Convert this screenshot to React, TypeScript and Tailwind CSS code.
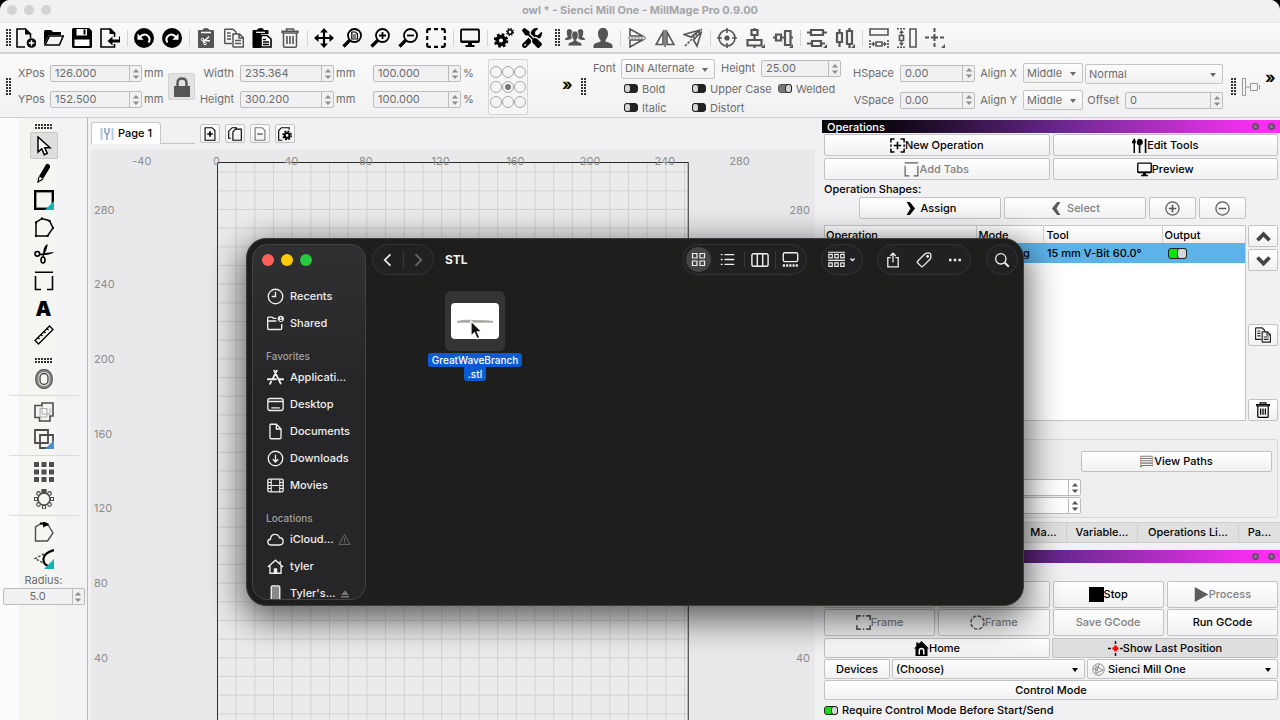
import { useId } from "react";
import type { ReactNode } from "react";
import clsx from "clsx";
import { FaScrewdriverWrench } from "react-icons/fa6";

/* ---------- icon drawings, 20x20 grid ---------- */

const person = "M10 0c3 0 5 2 5 5.500c0 3-1 5-2.500 6.500v1.500l5 1.800q2 .8 2 2.700v2h-19v-2q0-1.900 2-2.700l5-1.800V12C6 10.500 5 8.500 5 5.500C5 2 7 0 10 0z";

const ICONS: Record<string, ReactNode> = {
  newFile: (
    <>
      <path d="M9 19H1V1h8.500l5 5v4" />
      <path d="M9 0v6.500h6.500z" fill="currentColor" stroke="none" />
      <circle cx="15.500" cy="15" r="4.800" fill="currentColor" stroke="none" />
      <path d="M12.700 15h5.600M15.500 12.200v5.600" stroke="#fff" strokeWidth="1.500" />
    </>
  ),
  open: (
    <>
      <path d="M0 3.500Q0 2 1.500 2H7l2 2h8v3H5L1 15l-1 2z" fill="currentColor" stroke="none" />
      <path d="M5.500 8h13.700l-3.800 9H1z" />
    </>
  ),
  save: (
    <>
      <path d="M1.500 0H17l3 3v15.500q0 1.500-1.500 1.500h-17Q0 20 0 18.500v-17Q0 0 1.500 0z" fill="currentColor" stroke="none" />
      <path d="M4.500 1h10.500v6.500H4.500zM2.500 11.500h15V18h-15z" fill="#fff" stroke="none" />
      <path d="M11.500 1.500h2v5h-2z" fill="currentColor" stroke="none" />
    </>
  ),
  exportFile: (
    <>
      <path d="M14.500 16v3H1V1h9.500l4 4v4" />
      <path d="M9.500 0v6H16z" fill="currentColor" stroke="none" />
      <path d="M7.500 13l5-4.500v3H19V8.500h1v6h-7.500v3z" fill="currentColor" stroke="none" />
    </>
  ),
  undo: (
    <>
      <circle cx="10" cy="10" r="10" fill="currentColor" stroke="none" />
      <path d="M5.500 9.500q4.500-5 8.500-1.500q3 3 .5 6.500" stroke="#fff" strokeWidth="2" />
      <path d="M3.500 5.500v6.200h6.200z" fill="#fff" stroke="none" />
    </>
  ),
  redo: (
    <>
      <circle cx="10" cy="10" r="10" fill="currentColor" stroke="none" />
      <path d="M14.500 9.500q-4.500-5-8.500-1.500q-3 3-.5 6.500" stroke="#fff" strokeWidth="2" />
      <path d="M16.500 5.500v6.200h-6.200z" fill="#fff" stroke="none" />
    </>
  ),
  cut: (
    <>
      <path d="M3 2h3.500Q7 0 10 0t3.500 2H17q1 0 1 1v16q0 1-1 1H3q-1 0-1-1V3q0-1 1-1z" fill="currentColor" stroke="none" />
      <path d="M5 4.500h10M7 14.500l6-6M7 12l7 1" stroke="#fff" strokeWidth="1.300" />
      <circle cx="6.500" cy="11.500" r="1.300" stroke="#fff" strokeWidth="1" />
      <circle cx="9" cy="15.500" r="1.300" stroke="#fff" strokeWidth="1" />
    </>
  ),
  copy: (
    <g strokeWidth="1.500">
      <path d="M8 15.500H1.500q-.8 0-.8-.8V2q0-.8.8-.8H9L12 4v2" />
      <path d="M3 5h3.500M3 8h4M3 11h4" />
      <path d="M9 6h6.500l3.800 3.500V19H9.800q-.8 0-.8-.8zM15 6v4h4" fill="#f6f6f6" />
      <path d="M11 12.500h6M11 15.500h6" />
    </g>
  ),
  paste: (
    <>
      <path d="M1.500 2H5q.5-2 3.500-2T12 2h3.500q1 0 1 1v3H9v14H1.500q-1 0-1-1V3q0-1 1-1z" fill="currentColor" stroke="none" />
      <path d="M4 4.300h9" stroke="#fff" strokeWidth="1.200" />
      <path d="M9 7.500h6l4 3.500v8H9z" fill="#fff" strokeWidth="1.600" />
      <path d="M11 11.500h3M11 14h6M11 16.500h6" strokeWidth="1.300" />
    </>
  ),
  trash: (
    <g strokeWidth="1.500">
      <path d="M2 5h16M3.500 5v13q0 1.200 1.200 1.200h10.600q1.200 0 1.200-1.200V5M2 5V3.300h16V5M6.500 3V1h7v2" />
      <path d="M7 8v8M10 8v8M13 8v8" strokeWidth="1.600" />
    </g>
  ),
  move: (
    <>
      <path d="M10 3v14M3 10h14" strokeWidth="2.200" />
      <path d="M10 0l4 4.500H6zM10 20l4-4.500H6zM0 10l4.500-4v8zM20 10l-4.500-4v8z" fill="currentColor" stroke="none" />
    </>
  ),
  zoomPage: (
    <>
      <circle cx="12.500" cy="7.500" r="6.500" strokeWidth="1.800" />
      <path d="M8 12l-6.500 6.500" strokeWidth="3.200" />
      <path d="M9.800 4h3.700l2 2v5H9.800z" strokeWidth="1.200" />
      <path d="M11 7h3M11 9h3" strokeWidth="1" />
    </>
  ),
  zoomIn: (
    <>
      <circle cx="12.500" cy="7.500" r="6.500" strokeWidth="1.800" />
      <path d="M8 12l-6.500 6.500" strokeWidth="3.200" />
      <path d="M9 7.500h7M12.500 4v7" strokeWidth="1.800" />
    </>
  ),
  zoomOut: (
    <>
      <circle cx="12.500" cy="7.500" r="6.500" strokeWidth="1.800" />
      <path d="M8 12l-6.500 6.500" strokeWidth="3.200" />
      <path d="M9 7.500h7" strokeWidth="1.800" />
    </>
  ),
  frame: <path d="M1.200 5V2.500q0-1.300 1.300-1.300H5M8 1.200h4M15 1.200h2.500q1.300 0 1.300 1.300V5M18.800 8v4M18.800 15v2.500q0 1.300-1.300 1.300H15M12 18.800H8M5 18.800H2.500q-1.300 0-1.300-1.300V15M1.200 12V8" strokeWidth="2.200" />,
  monitor: (
    <>
      <rect x="1" y="1.500" width="18" height="12.500" rx="1" strokeWidth="1.800" />
      <path d="M1 12.500h18v2H1zM8 14h4v3h2.500v2h-9v-2H8z" fill="currentColor" stroke="none" />
    </>
  ),
  gears: (
    <>
      <circle cx="7" cy="12.500" r="3.900" strokeWidth="3.600" />
      <circle cx="7" cy="12.500" r="6.200" strokeWidth="2.200" strokeDasharray="2.600 2.270" />
      <circle cx="16" cy="4" r="2.200" strokeWidth="1.600" />
      <circle cx="16" cy="4" r="3.500" strokeWidth="1.100" strokeDasharray="1.400 1.350" />
    </>
  ),
  group: (
    <g fill="currentColor" stroke="none">
      <path d="M4.500 1q2.500 0 2.700 2.500l.3 4q-1 1-1 3.500L3 12H0q0-2.500 3-3Q1.500 7 1.800 3.800Q2 1 4.500 1zM15.500 1Q13 1 12.800 3.500l-.3 4q1 1 1 3.500l3.500 1h3q0-2.500-3-3q1.500-2 1.200-5.200Q18 1 15.500 1z" />
      <path d="M10 3c2 0 3.300 1.300 3.300 4c0 2-.8 3.500-1.600 4.500v1.300l3.800 1.700q1.500.7 1.500 2.500v1H3v-1q0-1.800 1.500-2.500l3.800-1.700v-1.300C7.500 10.500 6.700 9 6.700 7c0-2.700 1.300-4 3.300-4z" stroke="#f6f6f6" strokeWidth=".8" />
    </g>
  ),
  person: <path d={person} fill="currentColor" stroke="none" />,
  flipV: (
    <g strokeWidth="1.600">
      <path d="M3 1v7h12.500zM3 19v-7h12.500z" />
      <path d="M1 10h18" strokeDasharray="2 1.200" strokeWidth="1.200" />
    </g>
  ),
  flipH: (
    <g strokeWidth="1.600">
      <path d="M1 16.500h7V4zM19 16.500h-7V4z" />
      <path d="M10 2v17" strokeWidth="1.400" />
    </g>
  ),
  mirror: (
    <g strokeWidth="1.600">
      <path d="M1 6.500L17 2 8 9zM18.500 3.500L14 18l-3.500-6z" />
      <path d="M2 18L19 1" strokeDasharray="2.500 1.200" />
    </g>
  ),
  target: (
    <>
      <circle cx="10" cy="10" r="8" strokeWidth="1.600" />
      <circle cx="10" cy="10" r="2.600" fill="currentColor" stroke="none" />
      <path d="M10 0v5M10 15v5M0 10h5M15 10h5" strokeWidth="1.600" />
    </>
  ),
  alignV: (
    <g strokeWidth="2.200">
      <path d="M6.500 2h6v5h-6zM2.500 12h14v5.500h-14zM9.500 0v1M9.500 7v5M9.500 18v2" />
      <path d="M20 16v4h-4z" fill="currentColor" stroke="none" />
    </g>
  ),
  alignH: (
    <g strokeWidth="2.200">
      <path d="M3 6.500h5v6H3zM12 3h5.500v14H12zM0 9.500h2M8 9.500h4M18 9.500h2" />
      <path d="M20 16v4h-4z" fill="currentColor" stroke="none" />
    </g>
  ),
  distV: (
    <g strokeWidth="2.200">
      <path d="M4 2h12v5H4zM5 13h9v5H5zM0 4.500h4M16 4.500h4M0 15.500h5M14 15.500h4" />
      <path d="M20 16v4h-4z" fill="currentColor" stroke="none" />
    </g>
  ),
  distH: (
    <g strokeWidth="2.200">
      <path d="M2 5h5v9H2zM12 3h5v13h-5zM4.500 1v4M4.500 14v5M14.500 0v3M14.500 16v4" />
      <path d="M20 16v4h-4z" fill="currentColor" stroke="none" />
    </g>
  ),
  sameW: (
    <g strokeWidth="1.600">
      <path d="M1 1h18v6H1zM7 14h6v4H7zM3 16h3M14 16h3" />
      <path d="M5 13.500v5L2 16zM15 13.500v5l3-2.500z" fill="currentColor" stroke="none" />
      <path d="M1 12v8M19 12v8" strokeDasharray="2 1" />
    </g>
  ),
  sameH: (
    <g strokeWidth="1.600">
      <path d="M13 1h6v18h-6zM2.500 7.500h4v5h-4zM4.500 3v4M4.500 13v4" />
      <path d="M2 5h5L4.500 2zM2 15h5l-2.500 3z" fill="currentColor" stroke="none" />
      <path d="M0 .8h9M0 19.200h9" strokeDasharray="2 1" />
    </g>
  ),
  center: (
    <>
      <path d="M9.500 0v4M9.500 6v7M9.500 15v4M0 9.500h4M6 9.500h7M15 9.500h4" strokeWidth="2" />
      <path d="M20 16v4h-4z" fill="currentColor" stroke="none" />
    </>
  ),
  arrow: <path d="M4 1v15l3.800-3.300 2.500 6 3-1.300-2.500-5.700H16z" fill="#fff" strokeWidth="1.500" />,
  pencil: (
    <>
      <path d="M12 1.500q1.500-1.500 3 0t1 3L9 16l-4-2.800z" fill="currentColor" stroke="none" />
      <path d="M5 13.500L4 19l5-3" strokeWidth="1.200" />
    </>
  ),
  rect: (
    <>
      <rect x="1.200" y="1.200" width="17.600" height="17.600" strokeWidth="2.400" />
      <path d="M20 11v9h-9z" fill="#12b3b8" stroke="none" />
    </>
  ),
  polygon: (
    <>
      <path d="M2 19V5.500L8 1.500l7.500 2.200L19 11l-5.500 8z" strokeWidth="1.500" />
      <path d="M1 4.500h2v2H1zM7 .5h2v2H7zM14.500 3h2v2h-2zM18 10h2v2h-2zM12.500 18h2v2h-2zM1 18h2v2H1z" fill="currentColor" stroke="none" />
    </>
  ),
  scissors: (
    <>
      <circle cx="3.300" cy="9.800" r="2.300" strokeWidth="1.600" />
      <ellipse cx="9" cy="16" rx="2" ry="3" strokeWidth="1.600" />
      <path d="M5.500 9.800L20 8q-2 2.500-10 3l-4.500.2zM8.500 13L9.500 6Q10.500 1.500 13.500 0q.5 3-2.500 9l-1.500 4z" fill="currentColor" stroke="none" />
    </>
  ),
  tabs: <path d="M1 1.200h18M1.500 5v13.500H7M18.500 5v13.500H13" strokeWidth="1.600" />,
  ruler: (
    <g strokeWidth="1.300">
      <path d="M1 15.500L15.500 1 19 4.500 4.500 19z" />
      <path d="M4 12.500l1.500 1.500M7 9.500l1.500 1.500M10 6.500L11.500 8M13 3.500L14.500 5" />
    </g>
  ),
  ring: (
    <>
      <rect x="3" y="1.500" width="14" height="17" rx="7" strokeWidth="3" stroke="#888" />
      <rect x="6" y="4.500" width="8" height="11" rx="4" strokeWidth="1.400" />
      <rect x="1.800" y=".6" width="16.400" height="18.800" rx="8" strokeWidth="1" />
    </>
  ),
  union: (
    <>
      <path d="M1 3.500h7V1h11v13h-3v5H5.500v-3.500H1z" strokeWidth="1.600" />
      <path d="M6 6.500h7V15H6zM8 4v8h8V6" stroke="#aaa" strokeWidth="1" />
    </>
  ),
  intersect: (
    <>
      <path d="M1 1h13v13H1zM6 6h13v13H6z" strokeWidth="1.800" />
      <path d="M20 11v9h-9z" fill="#4a90d0" stroke="none" />
    </>
  ),
  gridArray: <path d="M0 0h5v5H0zM7.500 0h5v5h-5zM15 0h5v5h-5zM0 7.500h5v5H0zM7.500 7.500h5v5h-5zM15 7.500h5v5h-5zM0 15h5v5H0zM7.500 15h5v5h-5zM15 15h5v5h-5z" fill="currentColor" stroke="none" />,
  circArray: (
    <g strokeWidth="1.200">
      <circle cx="10" cy="10" r="6" strokeWidth="1.400" />
      <path d="M8 0h4v4H8z" fill="currentColor" />
      <path d="M8.500 16.500h3V20h-3zM.5 8.500h3v3h-3zM16.500 8.500h3v3h-3z" fill="#f5f5f2" />
      <g fill="#f5f5f2">
        <circle cx="4.500" cy="4.500" r="1.800" />
        <circle cx="15.500" cy="4.500" r="1.800" />
        <circle cx="4.500" cy="15.500" r="1.800" />
        <circle cx="15.500" cy="15.500" r="1.800" />
      </g>
    </g>
  ),
  startPoint: (
    <>
      <path d="M1.500 19V5L7 1.500l7.500 2L19 11l-5.500 8z" strokeWidth="1.400" />
      <path d="M6 1.500h4M10 .5v3.500l3.500-1.700z" stroke="#000" strokeWidth="1.800" />
    </>
  ),
  fillet: (
    <>
      <path d="M10 5L1 9.500l9 5" strokeDasharray="2.500 1.500" strokeWidth="1.400" />
      <path d="M20 1Q10 4 9.500 9.500T14 17" stroke="#000" strokeWidth="2.200" />
      <path d="M20 10v10H10z" fill="#12b3b8" stroke="none" />
    </>
  ),
  newOp: (
    <>
      <path d="M1.200 6V1.200H6M14 1.200h4.800V6M18.800 14v4.800H14M6 18.800H1.200V14M1.200 8.500v3M18.800 8.500v3" strokeWidth="2" />
      <path d="M10 5v10M5 10h10" strokeWidth="2.200" />
    </>
  ),
  bits: (
    <g fill="currentColor" stroke="none">
      <path d="M3 0l2 4v3H4v13H2V7H0V5zM10 1q3.500 0 4.500 3.500L14 8l-2.800 2v10H9V10L6.500 8V4.500Q7 1 10 1zM17 1h2.200v19H17z" />
    </g>
  ),
  next: <path d="M4 0h5l8 10-8 10H4l6-10z" fill="currentColor" stroke="none" />,
  prev: <path d="M16 0h-5L3 10l8 10h5l-6-10z" fill="currentColor" stroke="none" />,
  plusCircle: (
    <>
      <circle cx="10" cy="10" r="8.800" />
      <path d="M10 5v10M5 10h10" strokeWidth="2.200" />
    </>
  ),
  minusCircle: (
    <>
      <circle cx="10" cy="10" r="8.800" />
      <path d="M5 10h10" strokeWidth="2.200" />
    </>
  ),
  up: <path d="M2 15l8-8 8 8" strokeWidth="5" />,
  down: <path d="M2 6l8 8 8-8" strokeWidth="5" />,
  stop: <path d="M0 0h20v20H0z" fill="currentColor" stroke="none" />,
  play: <path d="M1 0l18 10L1 20z" fill="currentColor" stroke="none" />,
  dashCircle: <circle cx="10" cy="10" r="8.800" strokeWidth="2" strokeDasharray="4.900 2" />,
  corners: <path d="M1.200 6.500V1.200h5.300M13.500 1.200h5.300v5.300M18.800 13.500v5.300h-5.300M6.500 18.800H1.200v-5.300M9 1.200h2M9 18.800h2" strokeWidth="2.200" />,
  homeSolid: (
    <>
      <path d="M10 0l10 10h-2v10H2V10H0L3 7V2h3v2z" fill="currentColor" stroke="none" />
      <path d="M7 18v-5q0-3 3-3t3 3v5" fill="none" stroke="#fff" strokeWidth="2" />
    </>
  ),
  cross: (
    <>
      <path d="M10 0v4M10 16v4M0 10h4M16 10h4" stroke="#111" strokeWidth="2" />
      <path d="M10 6v8M6 10h8" stroke="#f00" strokeWidth="3.500" />
    </>
  ),
  machine: (
    <g strokeWidth="1.300" stroke="#777">
      <circle cx="10" cy="10" r="8.800" />
      <path d="M6 4v12M6 5l11 6-11 5M2 8l8 5M11 2l-3 9" />
    </g>
  ),
  paths: (
    <>
      <path d="M1 2h18M1 5.500h18M1 9h18M1 12.500h18M1 16h18" stroke="#777" strokeWidth="1.600" />
      <path d="M1 2v14M19 2v16" stroke="#b77" strokeWidth="1.200" />
      <path d="M0 17h3v2H0z" fill="#2c4" stroke="none" />
    </>
  ),
  pageAdd: (
    <>
      <path d="M3 1h10l4 4v14H3z" />
      <path d="M10 6v8M6 10h8" strokeWidth="2.400" />
    </>
  ),
  pageCopy: <path d="M4 16H1V6l5-5h6v2M7 7l4-4h8v16H7z" />,
  pageRemove: (
    <>
      <path d="M3 1h10l4 4v14H3z" />
      <path d="M6 10h8" strokeWidth="2.400" />
    </>
  ),
  pageGear: (
    <>
      <path d="M6 19H1V5l4-4h11v3" />
      <circle cx="13" cy="12" r="3.500" strokeWidth="3" />
      <circle cx="13" cy="12" r="6" strokeWidth="2" strokeDasharray="2.700 2" />
    </>
  ),
  // file browser glyphs
  clock: (
    <>
      <circle cx="10" cy="10" r="8.500" />
      <path d="M10 4.500V10H5.500" />
    </>
  ),
  sharedFolder: (
    <>
      <path d="M11 4H7.500L6 2.500H1.500Q.8 2.500.8 3.500v12q0 1.500 1.500 1.500h13.500q1.500 0 1.500-1.500V10.500M1 7h10" />
      <circle cx="16.300" cy="4.500" r="3.700" fill="#eee" stroke="none" />
      <path d="M16.300 2.300v2M14.800 6.300h3" stroke="#222" strokeWidth="1.400" />
    </>
  ),
  apps: <path d="M8.500 2l7.500 15M11.500 2L6.500 12M4.800 15L3.500 17.500M1 12h9.500M14.500 12H19" strokeWidth="2.200" strokeLinecap="round" />,
  desktop: (
    <>
      <rect x="1" y="3" width="18" height="14" rx="2.500" />
      <path d="M1 6.500h18M5 14h10" />
    </>
  ),
  doc: <path d="M4 1.500h7l5.500 5.500v10q0 1.500-1.500 1.500H5q-1.500 0-1.500-1.500V3Q3.500 1.500 4 1.500zM11 1.500V7h5.500" />,
  download: (
    <>
      <circle cx="10" cy="10" r="8.500" />
      <path d="M10 5.500v8.500M6.800 11l3.200 3.200 3.200-3.200" />
    </>
  ),
  film: (
    <>
      <rect x="1" y="2.500" width="18" height="15" rx="1.500" />
      <path d="M5 2.500v15M15 2.500v15M5 10h10M1 6.500h4M1 10h4M1 13.500h4M15 6.500h4M15 10h4M15 13.500h4" strokeWidth="1.300" />
    </>
  ),
  cloud: <path d="M5 16.500q-4 0-4-3.500 0-3 3-3.300Q4.500 4 9.500 4q4 0 5.200 4Q19 8 19 12.200q0 4.300-4 4.300z" />,
  house: (
    <>
      <path d="M1 10.500L10 2.500l9 8M3.500 9v9h13V9M15.500 3.500v4" />
      <path d="M8 12h4v6H8z" fill="currentColor" stroke="none" />
    </>
  ),
  phone: <rect x="5" y="1" width="10" height="18" rx="1.500" fill="#888" />,
  warning: <path d="M10 2.500l8.500 15h-17zM10 8v5M10 14.500v1.500" strokeWidth="1.300" />,
  eject: <path d="M10 3l8 9H2zM2 14h16v3H2z" fill="currentColor" stroke="none" />,
  left: <path d="M13 3l-7 7 7 7" strokeWidth="2.200" />,
  right: <path d="M7 3l7 7-7 7" strokeWidth="2.200" />,
  iconView: <path d="M2 2h6v6H2zM12 2h6v6h-6zM2 12h6v6H2zM12 12h6v6h-6z" />,
  listView: <path d="M6 3.500h13M6 10h13M6 16.500h13M1 3.500h2.500M1 10h2.500M1 16.500h2.500" strokeWidth="1.800" />,
  columnView: (
    <>
      <rect x="1" y="3" width="18" height="14" rx="2" />
      <path d="M7 3v14M13 3v14" />
    </>
  ),
  galleryView: (
    <>
      <rect x="1.500" y="2" width="17" height="10.500" rx="2" />
      <path d="M1 17h18" strokeWidth="3" strokeDasharray="2.500 1.300" />
    </>
  ),
  groupView: (
    <g strokeWidth="1.400">
      <path d="M0 1.500h20M0 11h20" />
      <path d="M1 4h4v4H1zM8 4h4v4H8zM15 4h4v4h-4zM1 14h4v4H1zM8 14h4v4H8zM15 14h4v4h-4z" />
    </g>
  ),
  chevron: <path d="M4 7l6 6 6-6" strokeWidth="3.500" />,
  share: <path d="M7 7H3.500v11.500h13V7H13M10 13V1.500M6.500 5L10 1.500 13.500 5" />,
  tag: (
    <>
      <path d="M2 11.500L11 2.500q1-1 2.500-1h3.500q1.500 0 1.500 1.500v3.500q0 1.500-1 2.500l-9 9q-1 1-2 0L2 13.500q-1-1 0-2z" />
      <circle cx="14.500" cy="5.500" r="1" fill="currentColor" />
    </>
  ),
  more: <path d="M1.500 10h3.500M8.200 10h3.600M15 10h3.500" strokeWidth="3.500" />,
  search: (
    <>
      <circle cx="8.500" cy="8.500" r="6.500" />
      <path d="M13.500 13.500l5 5" strokeWidth="2.400" />
    </>
  ),
};

function Icon({ name, className = "size-5" }: { name: string; className?: string }) {
  return (
    <svg viewBox="0 0 20 20" fill="none" stroke="currentColor" strokeWidth={1.6} className={clsx("shrink-0", className)} aria-hidden>
      {ICONS[name]}
    </svg>
  );
}

/* ---------- small controls ---------- */

function Grip({ rows, cols }: { rows: number; cols: number }) {
  return (
    <svg width={cols * 3} height={rows * 3} fill="#333" aria-hidden>
      {Array.from({ length: rows * cols }, (_, i) => (
        <rect key={i} x={(i % cols) * 3} y={Math.floor(i / cols) * 3} width="2" height="2" />
      ))}
    </svg>
  );
}

function Arrows({ className = "text-[#8e8e8e]" }: { className?: string }) {
  return (
    <svg viewBox="0 0 8 12" className={clsx("h-3 w-2", className)} fill="currentColor" aria-hidden>
      <path d="M4 1l3.200 3.500H.8zM4 11l3.200-3.500H.8z" />
    </svg>
  );
}

type SpinProps = { label: string; value: string; className?: string; hideLabel?: boolean; center?: boolean; white?: boolean; unit?: string; labelClass?: string };

function Spin({ label, value, className, hideLabel, center, white, unit, labelClass }: SpinProps) {
  const id = useId();
  return (
    <div className="flex items-center">
      {!hideLabel && (
        <label htmlFor={id} className={clsx("mr-1.5 text-right whitespace-nowrap", labelClass)}>
          {label}
        </label>
      )}
      <div className={clsx("flex h-[17px] rounded-[2px] border border-[#bcbcbc]", white ? "bg-white" : "bg-[#f1f1f3]", className)}>
        <input id={id} aria-label={hideLabel ? label : undefined} defaultValue={value} className={clsx("min-w-0 flex-1 bg-transparent px-1 outline-none", center && "text-center")} />
        <button type="button" aria-label={`Step ${label}`} className="flex w-3 shrink-0 items-center justify-center border-l border-[#bcbcbc]">
          <Arrows className={white ? "text-[#555]" : undefined} />
        </button>
      </div>
      {unit && <span className="ml-[2px] w-5">{unit}</span>}
    </div>
  );
}

function Select({ label, value, className, hideLabel, labelClass, icon }: { label: string; value: string; className?: string; hideLabel?: boolean; labelClass?: string; icon?: string }) {
  const id = useId();
  return (
    <div className="flex items-center">
      {!hideLabel && (
        <label htmlFor={id} className={clsx("mr-1.5 text-right whitespace-nowrap", labelClass)}>
          {label}
        </label>
      )}
      <div className={clsx("relative rounded-[2px] border border-[#c4c4c4] bg-linear-to-b from-[#fdfdfd] to-[#f1f1f1]", className)}>
        {icon && <Icon name={icon} className="absolute top-[3px] left-1 size-[13px]" />}
        <select id={id} aria-label={hideLabel ? label : undefined} className={clsx("block h-full w-full appearance-none outline-none", icon ? "pl-5" : "pl-[3px]")}>
          <option>{value}</option>
        </select>
        <svg viewBox="0 0 6 4" className="pointer-events-none absolute top-2 right-[6px] h-1 w-1.5" fill="currentColor" aria-hidden>
          <path d="M0 0h6L3 4z" />
        </svg>
      </div>
    </div>
  );
}

function Toggle({ label, on, green, large }: { label: string; on?: boolean; green?: boolean; large?: boolean }) {
  return (
    <label className="flex items-center gap-1">
      <input
        type="checkbox"
        defaultChecked={on}
        aria-label={label}
        className={clsx(
          "relative shrink-0 appearance-none rounded-[3px] border border-[#222] bg-[#222]",
          "before:absolute before:-top-px before:rounded-[3px] before:border before:border-[#222] before:bg-[#d5d5d5]",
          large ? "h-[11px] w-[19px] before:right-[-1px] before:h-[11px] before:w-[10px]" : "h-[9px] w-[14px] before:-left-px before:h-[9px] before:w-[7px] checked:before:left-[6px]",
          green ? "checked:bg-[#0be40b]" : "checked:border-[#555] checked:bg-[#777]",
        )}
      />
      {!large && <span>{label}</span>}
    </label>
  );
}

function Button({ icon, children, disabled, className, iconClass = "size-[15px]", label }: { icon?: string; children?: ReactNode; disabled?: boolean; className?: string; iconClass?: string; label?: string }) {
  return (
    <button
      type="button"
      aria-label={label}
      className={clsx(
        "flex min-w-0 items-center justify-center rounded-[2px] border border-[#c2c2c4] bg-linear-to-b from-white to-[#f1f1f1]",
        disabled && "text-[#808080] [&>svg]:text-[#5c5c5c]",
        className,
      )}
    >
      {icon && <Icon name={icon} className={iconClass} />}
      {children}
    </button>
  );
}

/* ---------- top bars ---------- */

const MAIN_TOOLS = ["newFile", "open", "save", "exportFile", "|", "undo", "redo", "|", "cut", "copy", "paste", "trash", "|", "move", "zoomPage", "zoomIn", "zoomOut", "frame", "|", "monitor", "|", "gears", "wrench"];
const ARRANGE_TOOLS = ["group", "person", "|", "flipV", "flipH", "mirror", "|", "target", "alignV", "alignH", "|", "distV", "distH", "|", "sameW", "sameH", "center"];
const DIMMED = ["cut", "copy", "trash", ...ARRANGE_TOOLS];

function ToolRow({ tools }: { tools: string[] }) {
  return (
    <>
      {tools.map((t, i) =>
        t === "|" ? (
          <span key={i} className="flex w-1.5 justify-center">
            <span className="h-4 w-px bg-[#d4d4d4]" />
          </span>
        ) : (
          <button key={i} type="button" aria-label={t} className={clsx("flex w-7 justify-center", DIMMED.includes(t) ? "text-[#555]" : "text-black")}>
            {t === "wrench" ? <FaScrewdriverWrench className="size-5" /> : <Icon name={t} />}
          </button>
        ),
      )}
    </>
  );
}

function PropertyBar() {
  return (
    <div className="flex h-16 shrink-0 items-center border-b border-[#cfcfcf] bg-linear-to-b from-[#fafafc] via-[#f5f5f4] to-[#f1f1f4] pt-[2px] text-[#6c6c6c]">
      <div className="flex w-[18px] pl-1.5">
        <Grip rows={6} cols={2} />
      </div>
      <div className="flex flex-col gap-[9px]">
        <Spin label="XPos" value="126.000" unit="mm" labelClass="w-[26px]" className="w-[92px]" />
        <Spin label="YPos" value="152.500" unit="mm" labelClass="w-[26px]" className="w-[92px]" />
      </div>
      <button type="button" aria-label="Lock aspect ratio" className="ml-1 flex h-[27px] w-[27px] items-center justify-center rounded-[2px] border border-[#d2d2d2] bg-[#e2e2e2] text-[#555]">
        <svg viewBox="0 0 18 20" className="h-5 w-[18px]" fill="none" stroke="currentColor" strokeWidth="2.400" aria-hidden>
          <path d="M4.500 10V6Q4.500 1.500 9 1.500T13.500 6v4" />
          <path d="M1 9h16v11H1z" fill="currentColor" stroke="none" />
        </svg>
      </button>
      <div className="ml-1 flex flex-col gap-[9px]">
        <Spin label="Width" value="235.364" unit="mm" labelClass="w-[35px]" className="w-[94px]" />
        <Spin label="Height" value="300.200" unit="mm" labelClass="w-[35px]" className="w-[94px]" />
      </div>
      <div className="ml-[17px] flex flex-col gap-[9px]">
        <Spin label="Width scale" hideLabel value="100.000" unit="%" className="w-[88px]" />
        <Spin label="Height scale" hideLabel value="100.000" unit="%" className="w-[88px]" />
      </div>
      <fieldset className="ml-[5px] flex h-14 w-10 items-center justify-center rounded-[2px] border border-[#d6d6d6] bg-[#f5f5f5]">
        <div className="grid grid-cols-3 gap-y-[3px]">
          {Array.from({ length: 9 }, (_, i) => (
            <input
              key={i}
              type="radio"
              name="anchor"
              aria-label={`Anchor ${i + 1}`}
              defaultChecked={i === 4}
              className="size-3 appearance-none rounded-full border border-[#a8a8a8] p-[2px] before:block before:size-full before:rounded-full checked:before:bg-[#777]"
            />
          ))}
        </div>
      </fieldset>
      <span className="mb-1.5 ml-[34px] w-3 text-[16px] leading-none font-bold text-black">»</span>
      <div className="ml-[7px] w-2">
        <Grip rows={6} cols={2} />
      </div>
      <div className="ml-1 flex flex-col gap-[3px]">
        <div className="flex items-center">
          <Select label="Font" value="DIN Alternate" labelClass="w-[22px]" className="h-5 w-[94px]" />
          <span className="w-1.5" />
          <Spin label="Height" value="25.00" labelClass="w-[34px]" className="w-20" />
        </div>
        <div className="grid grid-cols-[68px_86px_auto] gap-y-[5px] pl-[31px] leading-[14px]">
          <Toggle label="Bold" />
          <Toggle label="Upper Case" />
          <Toggle label="Welded" on />
          <Toggle label="Italic" />
          <Toggle label="Distort" />
        </div>
      </div>
      <div className="ml-3 flex flex-col gap-[10px]">
        <Spin label="HSpace" value="0.00" labelClass="w-[41px]" className="w-[75px]" />
        <Spin label="VSpace" value="0.00" labelClass="w-[41px]" className="w-[75px]" />
      </div>
      <div className="ml-1 flex flex-col gap-[7px]">
        <Select label="Align X" value="Middle" labelClass="w-[38px]" className="h-5 w-[60px]" />
        <Select label="Align Y" value="Middle" labelClass="w-[38px]" className="h-5 w-[60px]" />
      </div>
      <div className="ml-[2px] flex flex-col gap-2">
        <Select label="Style" hideLabel value="Normal" className="h-5 w-[138px]" />
        <Spin label="Offset" value="0" labelClass="w-[34px]" className="w-[98px]" />
      </div>
      <div className="ml-2 w-2">
        <Grip rows={6} cols={2} />
      </div>
      <svg viewBox="0 0 20 20" className="ml-0.5 size-5" fill="none" stroke="#999" aria-hidden>
        <path d="M1.500 1.500h3v17h-3zM9.500 6.500h7v7h-7zM5 10h4M18.500 8v4" />
      </svg>
      <span className="mb-5 ml-1 text-[16px] leading-none font-bold text-black">»</span>
    </div>
  );
}

/* ---------- left toolbox ---------- */

function Toolbox() {
  const tool = (name: string) => (
    <button
      key={name}
      type="button"
      aria-label={name}
      className={clsx("flex h-[27px] w-7 items-center justify-center", name === "arrow" && "rounded-[2px] border border-[#c8c8c8] bg-[#dedede]")}
    >
      {name === "text" ? <span className="pt-0.5 text-[20px] leading-none font-black">A</span> : <Icon name={name} />}
    </button>
  );
  const rule = (
    <span className="flex h-1.5 w-[70px] items-center">
      <span className="h-px w-full bg-[#dadada]" />
    </span>
  );
  return (
    <aside className="flex w-[88px] shrink-0 flex-col items-center border-r border-[#b9b9b9] bg-[linear-gradient(to_right,#fbfbfd_22%,#f5f5f2_22%_64%,#f2f2f5_64%)] text-black">
      <div className="flex h-[14px] items-center pt-1">
        <Grip rows={2} cols={6} />
      </div>
      {["arrow", "pencil", "rect", "polygon", "scissors", "tabs", "text", "ruler"].map(tool)}
      <div className="flex h-[17px] items-end pb-px">
        <Grip rows={2} cols={6} />
      </div>
      <div className="flex flex-col items-center text-[#4c4c4c]">
        {tool("ring")}
        {rule}
        {["union", "intersect"].map(tool)}
        {rule}
        {["gridArray", "circArray"].map(tool)}
        {rule}
        {["startPoint", "fillet"].map(tool)}
      </div>
      <span className="leading-4 text-[#6c6c6c]">Radius:</span>
      <div className="text-[#6c6c6c]">
        <Spin label="Radius" hideLabel center value="5.0" className="w-[82px]" />
      </div>
    </aside>
  );
}

/* ---------- work area ---------- */

const PX_PER_MM = 1.868;
const mmX = (mm: number) => 126.500 + mm * PX_PER_MM;
const mmY = (mm: number) => 59.500 + (280 - mm) * PX_PER_MM;

function WorkArea() {
  return (
    <main className="flex min-w-0 flex-1 flex-col pl-[3px]">
      <div className="flex h-8 shrink-0 items-start pt-1">
        <button type="button" className="flex h-[22px] w-[70px] items-center gap-1 rounded-t-[3px] border border-b-0 border-[#c6c6c6] bg-white pl-2 font-medium text-black">
          <svg viewBox="0 0 14 14" className="size-[14px]" fill="none" aria-hidden>
            <path d="M1.500 1v12M12.500 1v12" stroke="#b3c6f2" strokeWidth="2" />
            <path d="M5 1v4l2 3 2-3V1M7 8v5" stroke="#7b8cb8" strokeWidth="1.300" />
          </svg>
          Page 1
        </button>
        <span className="h-[22px] w-[34px] border-b border-[#c6c6c6]" />
        <div className="ml-[5px] flex gap-[5px] pt-[2px]">
          {["pageAdd", "pageCopy", "pageRemove", "pageGear"].map((n) => (
            <Button key={n} icon={n} label={n} iconClass="size-[14px]" className={clsx("h-[19px] w-5", n === "pageRemove" ? "text-[#777]" : "text-black")} />
          ))}
        </div>
      </div>
      <svg className="min-h-0 w-full flex-1 bg-[#e9e9eb] text-[11px]" fill="#8c8c8c" role="img" aria-label="Work area">
        <rect x={mmX(0)} y="11.500" width={252 * PX_PER_MM} height="2000" fill="#ebebeb" />
        <g stroke="#d2d2d2" strokeWidth="1">
          {Array.from({ length: 25 }, (_, i) => (
            <line key={i} x1={mmX((i + 1) * 10)} x2={mmX((i + 1) * 10)} y1="12" y2="2000" />
          ))}
          {Array.from({ length: 60 }, (_, i) => (
            <line key={i} x1={mmX(0)} x2={mmX(252)} y1={mmY(300 - i * 10)} y2={mmY(300 - i * 10)} />
          ))}
        </g>
        <rect x={mmX(0)} y="12.500" width={252 * PX_PER_MM} height="2000" fill="none" stroke="#2c2c2c" />
        {[-40, 0, 40, 80, 120, 160, 200, 240, 280].map((mm) => (
          <text key={mm} x={mmX(mm) - 1} y="15" textAnchor="middle">
            {mm}
          </text>
        ))}
        {[280, 240, 200, 160, 120, 80, 40].map((mm) => (
          <g key={mm}>
            <text x="3" y={mmY(mm) + 4}>
              {mm}
            </text>
            <text x="100%" dx="-5" y={mmY(mm) + 4} textAnchor="end">
              {mm}
            </text>
          </g>
        ))}
      </svg>
    </main>
  );
}

/* ---------- right dock ---------- */

function DockHeader({ title }: { title: string }) {
  return (
    <div className="flex h-[13px] shrink-0 items-center bg-linear-to-r from-[#08040c] from-12% via-[#6f2894] via-54% to-[#fb2cf4] to-95% pr-[5px] pl-[5px] text-white">
      <h2 className="flex-1 leading-3 font-medium">{title}</h2>
      <button type="button" aria-label="Float" className="mr-[9px] size-[7px] rounded-full border-2 border-[#6b4a70] bg-[#a374a6]" />
      <button type="button" aria-label="Close" className="size-[7px] rounded-full border-2 border-[#6b4a70] bg-[#a374a6]" />
    </div>
  );
}

function OperationsPanel() {
  return (
    <section className="flex flex-col">
      <DockHeader title="Operations" />
      <div className="flex flex-col px-[2px] pt-px">
        <div className="grid grid-cols-2 gap-x-[3px] gap-y-[2px]">
          <Button icon="newOp" className="h-[22px]">New Operation</Button>
          <Button icon="bits" className="h-[22px]">Edit Tools</Button>
          <Button icon="tabs" disabled className="h-[22px]">Add Tabs</Button>
          <Button icon="monitor" className="h-[22px]">Preview</Button>
        </div>
        <span className="pt-px leading-4">Operation Shapes:</span>
        <div className="flex gap-[3px] pr-8 pl-[35px]">
          <Button icon="next" iconClass="mr-1 size-[13px]" className="h-[22px] flex-1">Assign</Button>
          <Button icon="prev" iconClass="mr-1 size-[13px]" disabled className="h-[22px] flex-1">Select</Button>
          <Button icon="plusCircle" label="Add shapes" className="h-[22px] w-[47px] text-[#555]" />
          <Button icon="minusCircle" label="Remove shapes" className="h-[22px] w-[47px] text-[#555]" />
        </div>
        <div className="mt-[6px] flex h-[196px] gap-[2px]">
          <div className="flex-1 border border-[#c6c6c6] bg-white">
            <table className="w-full table-fixed border-collapse text-left">
              <thead>
                <tr className="h-[17px] bg-linear-to-b from-white to-[#f0f0f0] leading-4">
                  <th className="w-[151px] border-r border-[#d0d0d0] pl-px font-medium">Operation</th>
                  <th className="w-[67px] border-r border-[#d0d0d0] pl-0.5 font-medium">Mode</th>
                  <th className="w-[119px] border-r border-[#d0d0d0] pl-[3px] font-medium">Tool</th>
                  <th className="pl-0.5 font-medium">Output</th>
                </tr>
              </thead>
              <tbody>
                <tr className="h-5 bg-[#5cb3e9]">
                  <td />
                  <td className="pl-1">Roughing</td>
                  <td className="pl-1">15 mm V-Bit 60.0°</td>
                  <td className="pl-1.5">
                    <Toggle label="Output" on green large />
                  </td>
                </tr>
              </tbody>
            </table>
          </div>
          <div className="flex w-[30px] flex-col justify-between text-[#444]">
            <div className="flex flex-col gap-[2px]">
              <Button icon="up" label="Move up" className="h-[22px]" />
              <Button icon="down" label="Move down" className="h-[22px]" />
            </div>
            <Button icon="copy" label="Duplicate" iconClass="size-4" className="h-[22px] text-[#222]" />
            <Button icon="trash" label="Delete" iconClass="size-4" className="h-[22px] text-black" />
          </div>
        </div>
        <div className="mt-[18px] flex h-[79px] flex-col rounded-[2px] border border-[#d8d8d8] bg-[#eeeeef] pt-[11px]">
          <Button icon="paths" iconClass="mr-px size-[13px]" className="mr-[5px] h-[21px] w-[191px] self-end">View Paths</Button>
          <div className="mt-[7px] mr-[196px] flex flex-col items-end gap-px">
            <Spin label="Speed" hideLabel white value="" className="w-[190px]" />
            <Spin label="Plunge" hideLabel white value="" className="w-[190px]" />
          </div>
        </div>
      </div>
      <div className="mt-1 flex h-[21px] border-y border-[#cfcfcf] bg-[#e0e0e1]">
        <button type="button" className="flex-1 border-r border-[#cfcfcf]">Operations</button>
        <button type="button" className="w-[46px] border-r border-[#cfcfcf]">Ma...</button>
        <button type="button" className="w-[71px] border-r border-[#cfcfcf]">Variable...</button>
        <button type="button" className="w-[101px] border-r border-[#cfcfcf]">Operations Li...</button>
        <button type="button" className="w-[41px]">Pa...</button>
      </div>
    </section>
  );
}

function MachinePanel() {
  return (
    <section className="mt-[7px] flex flex-col">
      <DockHeader title="Machine" />
      <div className="flex flex-col px-[2px] pt-[18px]">
        <div className="grid grid-cols-4 gap-x-[3px] gap-y-px">
          <Button label="Start" disabled className="h-[27px]" />
          <Button label="Pause" disabled className="h-[27px]" />
          <Button icon="stop" className="h-[27px]">Stop</Button>
          <Button icon="play" disabled className="h-[27px]">Process</Button>
          <Button icon="corners" disabled className="h-[27px]">Frame</Button>
          <Button icon="dashCircle" disabled className="h-[27px]">Frame</Button>
          <Button disabled className="h-[27px]">Save GCode</Button>
          <Button className="h-[27px]">Run GCode</Button>
        </div>
        <div className="mt-[2px] grid grid-cols-2 gap-x-[2px]">
          <Button icon="homeSolid" className="h-5">Home</Button>
          <Button icon="cross" className="h-5 bg-[#dedede] bg-none">Show Last Position</Button>
        </div>
        <div className="mt-px flex gap-[2px]">
          <Button className="h-5 w-[66px]">Devices</Button>
          <Select label="Port" hideLabel value="(Choose)" className="h-5 w-[193px]" />
          <Select label="Machine" hideLabel value="Sienci Mill One" icon="machine" className="h-5 w-[191px]" />
        </div>
        <Button className="mt-px h-5">Control Mode</Button>
        <div className="mt-[3px] leading-[14px]">
          <Toggle label="Require Control Mode Before Start/Send" on green />
        </div>
      </div>
    </section>
  );
}

/* ---------- file browser window ---------- */

const FAVORITES = [
  { icon: "apps", name: "Applicati..." },
  { icon: "desktop", name: "Desktop" },
  { icon: "doc", name: "Documents" },
  { icon: "download", name: "Downloads" },
  { icon: "film", name: "Movies" },
];

function Place({ icon, name, extra }: { icon: string; name: string; extra?: string }) {
  return (
    <li>
      <a href="#" className="flex h-[27px] items-center pl-px">
        <Icon name={icon} className="mr-1.5 size-[17px]" />
        {name}
        {extra && <Icon name={extra} className={clsx("ml-1 text-[#777]", extra === "eject" ? "size-[10px]" : "size-[13px]")} />}
      </a>
    </li>
  );
}

const pill = "flex h-[31px] items-center rounded-full border border-[#343436] bg-[#212123]";

function FileBrowser() {
  return (
    <div className="absolute top-[238px] left-[246px] flex h-[368px] w-[778px] rounded-[20px] border border-[#3d3d3d] bg-[#1e1e1d] p-[5px] text-[#efefef] shadow-[0_10px_34px_4px_rgba(0,0,0,0.6)]">
      <nav className="w-[114px] shrink-0 overflow-hidden rounded-[15px] border border-[#434345] bg-linear-to-b from-[#303032] to-[#262628] to-40% px-[13px] pt-[9px] text-[11px] font-medium">
        <div className="-ml-1 flex gap-[7px] pb-[17px]">
          <span className="size-3 rounded-full bg-[#fe5f57]" />
          <span className="size-3 rounded-full bg-[#fdc906]" />
          <span className="size-3 rounded-full bg-[#28c840]" />
        </div>
        <ul>
          <Place icon="clock" name="Recents" />
          <Place icon="sharedFolder" name="Shared" />
        </ul>
        <h3 className="flex h-[27px] items-end text-[10px] leading-4 text-[#a0a0a2]">Favorites</h3>
        <ul>
          {FAVORITES.map((f) => (
            <Place key={f.name} {...f} />
          ))}
        </ul>
        <h3 className="flex h-[27px] items-end text-[10px] leading-4 text-[#a0a0a2]">Locations</h3>
        <ul>
          <Place icon="cloud" name="iCloud..." extra="warning" />
          <Place icon="house" name="tyler" />
          <Place icon="phone" name="Tyler's..." extra="eject" />
        </ul>
      </nav>
      <div className="min-w-0 flex-1 pl-1.5">
        <header className="flex items-center">
          <div className={clsx(pill, "w-[62px]")}>
            <button type="button" aria-label="Back" className="flex flex-1 justify-center border-r border-[#39393b]"><Icon name="left" className="size-4" /></button>
            <button type="button" aria-label="Forward" className="flex flex-1 justify-center text-[#6c6c6e]"><Icon name="right" className="size-4" /></button>
          </div>
          <h1 className="ml-[11px] flex-1 text-[12px] font-bold">STL</h1>
          <div className={clsx(pill, "w-[125px] pl-[3px]")}>
            <button type="button" aria-label="Icons" className="flex size-[25px] items-center justify-center rounded-full bg-[#454547]"><Icon name="iconView" className="size-[15px]" /></button>
            <button type="button" aria-label="List" className="flex w-[34px] justify-center border-r border-[#39393b]"><Icon name="listView" className="size-[15px]" /></button>
            <button type="button" aria-label="Columns" className="flex w-[31px] justify-center border-r border-[#39393b]"><Icon name="columnView" className="size-[18px]" /></button>
            <button type="button" aria-label="Gallery" className="flex w-7 justify-center"><Icon name="galleryView" className="size-[17px]" /></button>
          </div>
          <button type="button" aria-label="Group items" className={clsx(pill, "ml-[14px] w-[42px] justify-center gap-1")}>
            <Icon name="groupView" className="size-[17px]" />
            <Icon name="chevron" className="size-[7px]" />
          </button>
          <div className={clsx(pill, "ml-[14px] w-[94px]")}>
            <button type="button" aria-label="Share" className="flex flex-1 justify-center"><Icon name="share" className="size-4" /></button>
            <button type="button" aria-label="Tags" className="flex flex-1 justify-center"><Icon name="tag" className="size-4" /></button>
            <button type="button" aria-label="More" className="flex flex-1 justify-center"><Icon name="more" className="size-[14px]" /></button>
          </div>
          <button type="button" aria-label="Search" className={clsx(pill, "ml-[15px] w-8 justify-center")}>
            <Icon name="search" className="size-4" />
          </button>
        </header>
        <figure className="mt-4 ml-[42px] flex w-[122px] flex-col items-center">
          <div className="relative flex size-[60px] items-center justify-center rounded-[6px] bg-[#343434]">
            <svg viewBox="0 0 48 36" className="h-9 w-12 rounded-[4px] bg-white" aria-hidden>
              <path d="M6 18q8-2 18-1l11 .3 7 .7v1.700H6z" fill="#a9a9a6" />
            </svg>
            <svg viewBox="0 0 14 20" className="absolute top-[29px] left-[25px] h-5 w-[14px]" aria-hidden>
              <path d="M1 1v15l3.500-3.200 2.500 6 2.800-1.200-2.500-5.800H12z" fill="#111" stroke="#fff" strokeWidth="1.200" />
            </svg>
          </div>
          <figcaption className="mt-[2px] flex flex-col items-center text-[10px] leading-[14px] font-medium text-white">
            <span className="rounded-[3px] bg-[#0b5bd3] px-1">GreatWaveBranch</span>
            <span className="rounded-b-[3px] bg-[#0b5bd3] px-1">.stl</span>
          </figcaption>
        </figure>
      </div>
    </div>
  );
}

export default function App() {
  return (
    <div className="relative h-screen overflow-hidden bg-black font-['Inter','Liberation_Sans',sans-serif] text-[11px]">
      <div className="flex h-full flex-col overflow-hidden rounded-t-[10px] bg-[#f1f1f4]">
        <div className="relative flex h-[22px] shrink-0 items-center justify-center bg-[#f1f1f4] pb-0.5">
          <div className="absolute left-[7px] flex gap-[7px]">
            <span className="size-[10px] rounded-full bg-[#d3d3d3]" />
            <span className="size-[10px] rounded-full bg-[#d3d3d3]" />
            <span className="size-[10px] rounded-full bg-[#d3d3d3]" />
          </div>
          <h1 className="font-bold text-[#a5a5a7]">owl * - Sienci Mill One - MillMage Pro 0.9.00</h1>
        </div>
        <div className="flex h-8 shrink-0 items-center border-t border-b-2 border-[#d5d5d3] border-t-[#e9e9ea] bg-linear-to-b from-[#fbfbfb] to-[#f1f1f4]">
          <div className="flex w-3 pl-1.5">
            <Grip rows={6} cols={2} />
          </div>
          <ToolRow tools={MAIN_TOOLS} />
          <div className="flex w-[15px] justify-center pl-2">
            <Grip rows={6} cols={2} />
          </div>
          <ToolRow tools={ARRANGE_TOOLS} />
        </div>
        <PropertyBar />
        <div className="flex min-h-0 flex-1">
          <Toolbox />
          <WorkArea />
          <div className="ml-[7px] flex w-[458px] shrink-0 flex-col pt-[2px] font-medium text-black">
            <OperationsPanel />
            <MachinePanel />
          </div>
        </div>
      </div>
      <FileBrowser />
    </div>
  );
}
